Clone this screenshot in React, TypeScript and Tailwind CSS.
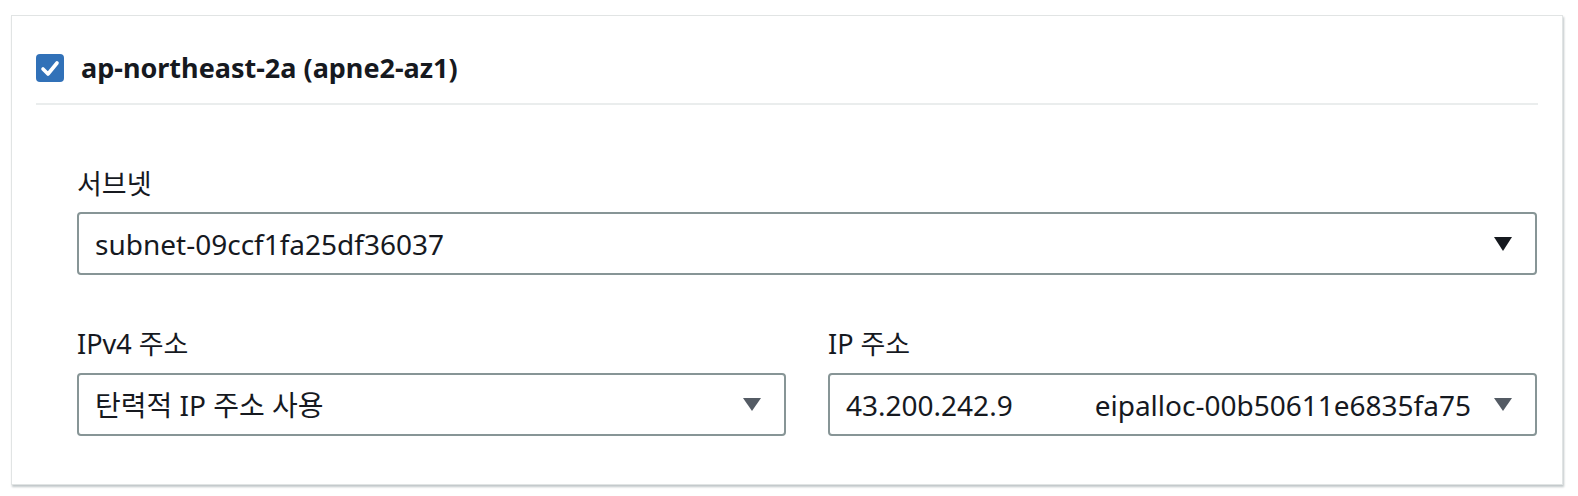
import React from 'react';

const font = { fontFamily: '"Noto Sans", "Noto Sans CJK KR", sans-serif' };

function Caret({ color = '#16191f', h = 16 }: { color?: string; h?: number }) {
  return (
    <svg width="20" height={h} viewBox={`0 0 20 ${h}`} className="shrink-0">
      <polygon points={`1,1 19,1 10,${h - 1}`} fill={color} />
    </svg>
  );
}

function SelectBox({ children, caretColor, caretH }: { children: React.ReactNode; caretColor?: string; caretH?: number }) {
  return (
    <div className="flex h-[63px] items-center rounded-[4px] border-2 border-[#879596] bg-white pl-[16px] pr-[22px]">
      <div className="flex flex-1 items-center text-[28px] text-[#16191f]">{children}</div>
      <Caret color={caretColor} h={caretH} />
    </div>
  );
}

export default function App() {
  return (
    <div className="h-[496px] w-full bg-white pl-[11px] pr-[15px] pt-[15px]" style={font}>
      <div className="h-[470px] border border-[#e1e4e4] bg-white shadow-[1px_2px_2px_0_rgba(0,28,36,0.25)]">
        <div className="px-[24px] pt-[38px]">
          <div className="flex h-[28px] items-center gap-[17px]">
            <div className="flex h-[28px] w-[28px] items-center justify-center rounded-[4px] bg-[#3171b8]">
              <svg width="20" height="17" viewBox="0 0 20 17">
                <path d="M3 9 L8 14 L17 3" fill="none" stroke="white" strokeWidth="3.6" strokeLinecap="round" strokeLinejoin="round" />
              </svg>
            </div>
            <span className="text-[27px] font-bold text-[#16191f]">ap-northeast-2a (apne2-az1)</span>
          </div>
          <div className="mt-[21px] border-b-2 border-[#eaeded]" />
        </div>

        <div className="pl-[65px] pr-[25px] pt-[63px]">
          <div className="mb-[12px] text-[27px] leading-[32px] text-[#16191f]">서브넷</div>
          <SelectBox>subnet-09ccf1fa25df36037</SelectBox>

          <div className="mt-[53px] grid grid-cols-2 gap-[42px]">
            <div>
              <div className="mb-[13px] text-[27px] leading-[32px] text-[#16191f]">IPv4 주소</div>
              <SelectBox caretColor="#545b64" caretH={15}>탄력적 IP 주소 사용</SelectBox>
            </div>
            <div>
              <div className="mb-[13px] text-[27px] leading-[32px] text-[#16191f]">IP 주소</div>
              <SelectBox caretColor="#545b64" caretH={15}>
                <span>43.200.242.9</span>
                <span className="ml-auto mr-[22px]">eipalloc-00b50611e6835fa75</span>
              </SelectBox>
            </div>
          </div>
        </div>
      </div>
    </div>
  );
}
